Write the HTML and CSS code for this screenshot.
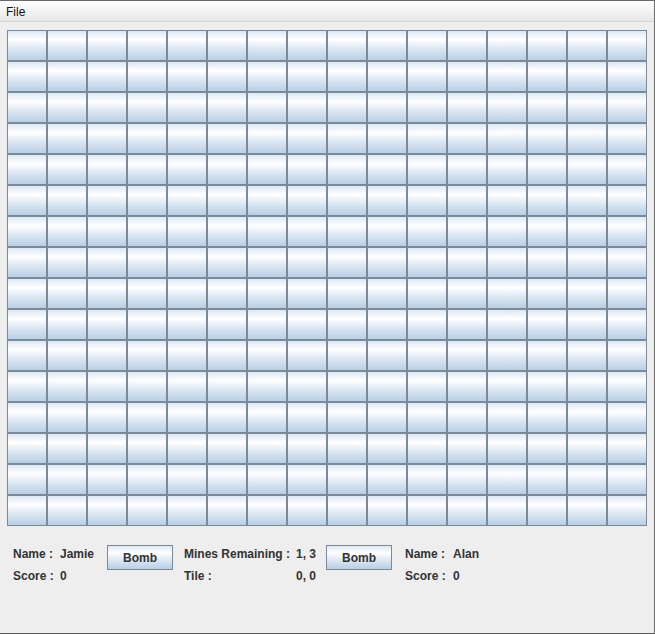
FILE: index.html
```html
<!DOCTYPE html>
<html>
<head>
<meta charset="utf-8">
<title>Minesweeper</title>
<link rel="stylesheet" href="styles.css">
</head>
<body>
<div class="frame">
  <div class="menubar"><span class="menu">File</span></div>
  <div class="content">
    <div class="board">
      <button class="tile"></button><button class="tile"></button><button class="tile"></button><button class="tile"></button><button class="tile"></button><button class="tile"></button><button class="tile"></button><button class="tile"></button><button class="tile"></button><button class="tile"></button><button class="tile"></button><button class="tile"></button><button class="tile"></button><button class="tile"></button><button class="tile"></button><button class="tile"></button>
      <button class="tile"></button><button class="tile"></button><button class="tile"></button><button class="tile"></button><button class="tile"></button><button class="tile"></button><button class="tile"></button><button class="tile"></button><button class="tile"></button><button class="tile"></button><button class="tile"></button><button class="tile"></button><button class="tile"></button><button class="tile"></button><button class="tile"></button><button class="tile"></button>
      <button class="tile"></button><button class="tile"></button><button class="tile"></button><button class="tile"></button><button class="tile"></button><button class="tile"></button><button class="tile"></button><button class="tile"></button><button class="tile"></button><button class="tile"></button><button class="tile"></button><button class="tile"></button><button class="tile"></button><button class="tile"></button><button class="tile"></button><button class="tile"></button>
      <button class="tile"></button><button class="tile"></button><button class="tile"></button><button class="tile"></button><button class="tile"></button><button class="tile"></button><button class="tile"></button><button class="tile"></button><button class="tile"></button><button class="tile"></button><button class="tile"></button><button class="tile"></button><button class="tile"></button><button class="tile"></button><button class="tile"></button><button class="tile"></button>
      <button class="tile"></button><button class="tile"></button><button class="tile"></button><button class="tile"></button><button class="tile"></button><button class="tile"></button><button class="tile"></button><button class="tile"></button><button class="tile"></button><button class="tile"></button><button class="tile"></button><button class="tile"></button><button class="tile"></button><button class="tile"></button><button class="tile"></button><button class="tile"></button>
      <button class="tile"></button><button class="tile"></button><button class="tile"></button><button class="tile"></button><button class="tile"></button><button class="tile"></button><button class="tile"></button><button class="tile"></button><button class="tile"></button><button class="tile"></button><button class="tile"></button><button class="tile"></button><button class="tile"></button><button class="tile"></button><button class="tile"></button><button class="tile"></button>
      <button class="tile"></button><button class="tile"></button><button class="tile"></button><button class="tile"></button><button class="tile"></button><button class="tile"></button><button class="tile"></button><button class="tile"></button><button class="tile"></button><button class="tile"></button><button class="tile"></button><button class="tile"></button><button class="tile"></button><button class="tile"></button><button class="tile"></button><button class="tile"></button>
      <button class="tile"></button><button class="tile"></button><button class="tile"></button><button class="tile"></button><button class="tile"></button><button class="tile"></button><button class="tile"></button><button class="tile"></button><button class="tile"></button><button class="tile"></button><button class="tile"></button><button class="tile"></button><button class="tile"></button><button class="tile"></button><button class="tile"></button><button class="tile"></button>
      <button class="tile"></button><button class="tile"></button><button class="tile"></button><button class="tile"></button><button class="tile"></button><button class="tile"></button><button class="tile"></button><button class="tile"></button><button class="tile"></button><button class="tile"></button><button class="tile"></button><button class="tile"></button><button class="tile"></button><button class="tile"></button><button class="tile"></button><button class="tile"></button>
      <button class="tile"></button><button class="tile"></button><button class="tile"></button><button class="tile"></button><button class="tile"></button><button class="tile"></button><button class="tile"></button><button class="tile"></button><button class="tile"></button><button class="tile"></button><button class="tile"></button><button class="tile"></button><button class="tile"></button><button class="tile"></button><button class="tile"></button><button class="tile"></button>
      <button class="tile"></button><button class="tile"></button><button class="tile"></button><button class="tile"></button><button class="tile"></button><button class="tile"></button><button class="tile"></button><button class="tile"></button><button class="tile"></button><button class="tile"></button><button class="tile"></button><button class="tile"></button><button class="tile"></button><button class="tile"></button><button class="tile"></button><button class="tile"></button>
      <button class="tile"></button><button class="tile"></button><button class="tile"></button><button class="tile"></button><button class="tile"></button><button class="tile"></button><button class="tile"></button><button class="tile"></button><button class="tile"></button><button class="tile"></button><button class="tile"></button><button class="tile"></button><button class="tile"></button><button class="tile"></button><button class="tile"></button><button class="tile"></button>
      <button class="tile"></button><button class="tile"></button><button class="tile"></button><button class="tile"></button><button class="tile"></button><button class="tile"></button><button class="tile"></button><button class="tile"></button><button class="tile"></button><button class="tile"></button><button class="tile"></button><button class="tile"></button><button class="tile"></button><button class="tile"></button><button class="tile"></button><button class="tile"></button>
      <button class="tile"></button><button class="tile"></button><button class="tile"></button><button class="tile"></button><button class="tile"></button><button class="tile"></button><button class="tile"></button><button class="tile"></button><button class="tile"></button><button class="tile"></button><button class="tile"></button><button class="tile"></button><button class="tile"></button><button class="tile"></button><button class="tile"></button><button class="tile"></button>
      <button class="tile"></button><button class="tile"></button><button class="tile"></button><button class="tile"></button><button class="tile"></button><button class="tile"></button><button class="tile"></button><button class="tile"></button><button class="tile"></button><button class="tile"></button><button class="tile"></button><button class="tile"></button><button class="tile"></button><button class="tile"></button><button class="tile"></button><button class="tile"></button>
      <button class="tile"></button><button class="tile"></button><button class="tile"></button><button class="tile"></button><button class="tile"></button><button class="tile"></button><button class="tile"></button><button class="tile"></button><button class="tile"></button><button class="tile"></button><button class="tile"></button><button class="tile"></button><button class="tile"></button><button class="tile"></button><button class="tile"></button><button class="tile"></button>
    </div>
    <div class="info">
      <span class="label">Name :</span><span class="value">Jamie</span>
      <button class="bomb bomb-left">Bomb</button>
      <span class="label">Mines Remaining :</span><span class="value">1, 3</span>
      <button class="bomb bomb-right">Bomb</button>
      <span class="label">Name :</span><span class="value">Alan</span>

      <span class="label row2 c1">Score :</span><span class="value row2 c2">0</span>
      <span class="label row2 c4">Tile :</span><span class="value row2 c5">0, 0</span>
      <span class="label row2 c7">Score :</span><span class="value row2 c8">0</span>
    </div>
  </div>
</div>
</body>
</html>
```

FILE: styles.css
```css
html, body {
  margin: 0;
  padding: 0;
}

body {
  width: 655px;
  height: 634px;
  background: #eeeeee;
  font-family: "Liberation Sans", Arial, sans-serif;
  overflow: hidden;
}

.frame {
  box-sizing: border-box;
  width: 655px;
  height: 634px;
  border-top: 1px solid #6a6a6a;
  border-right: 1px solid #6a6a6a;
  border-bottom: 1px solid #5a5a5a;
  background: #eeeeee;
  display: flex;
  flex-direction: column;
}

.menubar {
  box-sizing: border-box;
  height: 21px;
  padding: 1px 0 0 6px;
  background: linear-gradient(to bottom, #fdfdfd 0%, #f3f3f3 55%, #e6e6e6 100%);
  border-bottom: 1px solid #d6d6d6;
  display: flex;
  align-items: center;
}

.menu {
  font-size: 12px;
  line-height: 20px;
  color: #111111;
}

.content {
  padding: 8px 0 0 7px;
}

.board {
  display: grid;
  grid-template-columns: repeat(16, 40px);
  grid-auto-rows: 31px;
}

.tile,
.bomb {
  box-sizing: border-box;
  margin: 0;
  padding: 0;
  border: 1px solid #7a8a99;
  border-radius: 0;
  background: linear-gradient(to bottom, #dde8f3 0%, #ffffff 30%, #dde8f3 60%, #b8cfe5 100%);
  font-family: inherit;
}

.tile {
  width: 40px;
  height: 31px;
}

.info {
  margin-top: 17px;
  padding-left: 6px;
  display: grid;
  grid-template-columns: 47px 47px 77px 112px 30px 79px 48px auto;
  grid-template-rows: 22px 22px;
  font-size: 12px;
  font-weight: bold;
  color: #333333;
  line-height: 22px;
}

.label,
.value {
  white-space: nowrap;
}

.bomb {
  grid-row: 1 / 3;
  align-self: start;
  justify-self: start;
  width: 66px;
  height: 25px;
  margin-top: 2px;
  padding-top: 1px;
  font-size: 12px;
  font-weight: bold;
  color: #333333;
  line-height: 22px;
}

.bomb-left { grid-column: 3; }
.bomb-right { grid-column: 6; }

.row2 { grid-row: 2; }
.c1 { grid-column: 1; }
.c2 { grid-column: 2; }
.c4 { grid-column: 4; }
.c5 { grid-column: 5; }
.c7 { grid-column: 7; }
.c8 { grid-column: 8; }
```
